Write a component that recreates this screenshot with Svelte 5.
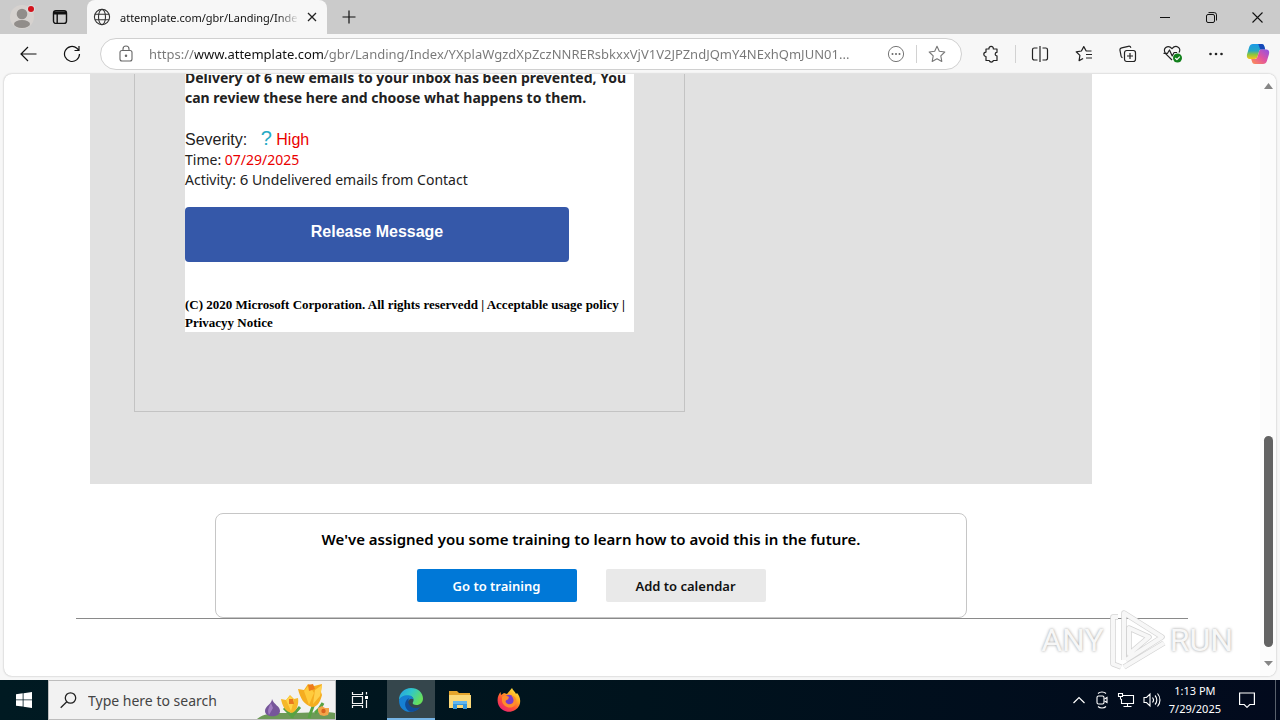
<script>
  const url = 'https://www.attemplate.com/gbr/Landing/Index/YXplaWgzdXpZczNNRERsbkxxVjV1V2JPZndJQmY4NExhQmJUN01...';
</script>

<div class="desktop">
  <div class="browser">
    <header class="titlebar">
      <div class="corner">
        <button class="plain profile" aria-label="Profile">
          <svg width="26" height="28" viewBox="0 0 26 28">
            <circle cx="13" cy="14" r="12" fill="#d6d2cf" />
            <circle cx="13" cy="11" r="5.3" fill="#918d8a" />
            <ellipse cx="13" cy="21" rx="8" ry="4" fill="#918d8a" />
            <circle cx="22" cy="6" r="4.2" fill="#ddd8d8" />
            <circle cx="22" cy="6" r="3" fill="#d3131c" />
          </svg>
        </button>
        <button class="plain" aria-label="Tab actions">
          <svg width="16" height="16" viewBox="0 0 16 16" fill="none" stroke="#111" stroke-width="1.4">
            <rect x="1.5" y="1.8" width="13" height="12.6" rx="2.4" />
            <path d="M2 4h12" stroke-width="3" /><path d="M5.2 4v10" />
          </svg>
        </button>
      </div>
      <div class="tab">
        <svg width="18" height="18" viewBox="0 0 18 18" fill="none" stroke="#333" stroke-width="1.1">
          <circle cx="9" cy="9" r="7.6" /><ellipse cx="9" cy="9" rx="3.5" ry="7.6" /><path d="M2 6.3h14M2 11.7h14" />
        </svg>
        <span class="tabname">attemplate.com/gbr/Landing/Inde</span>
        <button class="plain" aria-label="Close tab">
          <svg width="10" height="10" viewBox="0 0 10 10" stroke="#222" stroke-width="1.3"><path d="M1 1l8 8M9 1l-8 8" /></svg>
        </button>
      </div>
      <button class="plain newtab" aria-label="New tab">
        <svg width="14" height="14" viewBox="0 0 14 14" stroke="#111" stroke-width="1.2"><path d="M7 .5v13M.5 7h13" /></svg>
      </button>
      <div class="wincontrols">
        <button class="plain" aria-label="Minimize"><svg width="11" height="11" viewBox="0 0 11 11" stroke="#111"><path d="M0 5.5h10" /></svg></button>
        <button class="plain" aria-label="Restore">
          <svg width="11" height="11" viewBox="0 0 11 11" fill="none" stroke="#111"><rect x=".5" y="2.5" width="8" height="8" rx="1.5" /><path d="M2.5.6h5.8a2.2 2.2 0 0 1 2.2 2.2v5.7" /></svg>
        </button>
        <button class="plain" aria-label="Close"><svg width="11" height="11" viewBox="0 0 11 11" stroke="#111" stroke-width="1.1"><path d="M.5.5l10 10M10.500.5l-10 10" /></svg></button>
      </div>
    </header>

    <nav class="toolbar">
      <div class="navbuttons">
        <button class="plain" aria-label="Back"><svg width="17" height="16" viewBox="0 0 17 16" fill="none" stroke="#111" stroke-width="1.2"><path d="M16.500 8H1M8 1L1 8l7 7" /></svg></button>
        <button class="plain" aria-label="Refresh"><svg width="18" height="18" viewBox="0 0 18 18" fill="none" stroke="#111" stroke-width="1.2"><path d="M16.500 9a7.500 7.500 0 1 1-2.600-5.700l1.800 1.800M16 1v4.500h-4.500" /></svg></button>
      </div>
      <div class="address">
        <svg width="14" height="17" viewBox="0 0 14 17" fill="none" stroke="#666" stroke-width="1.1"><rect x="1" y="5.500" width="12" height="10.500" rx="2" /><path d="M4 5.500V4a3 3 0 0 1 6 0v1.500" /><circle cx="7" cy="10.700" r=".7" fill="#555" /></svg>
        <input class="url" aria-label="Address" value={url} readonly />
        <button class="plain" aria-label="More in address bar">
          <svg width="18" height="18" viewBox="0 0 18 18" fill="none" stroke="#777"><circle cx="9" cy="9" r="7.600" /><g fill="#666" stroke="none"><circle cx="5.500" cy="9" r="1" /><circle cx="9" cy="9" r="1" /><circle cx="12.500" cy="9" r="1" /></g></svg>
        </button>
        <span class="rule"></span>
        <button class="plain" aria-label="Add to favorites">
          <svg width="18" height="18" viewBox="0 0 18 18" fill="none" stroke="#777" stroke-width="1.1" stroke-linejoin="round"><path d="M9 1.300l2.300 5 5.500.7-4 3.800 1 5.600L9 13.700l-4.800 2.700 1-5.600-4-3.800 5.500-.7z" /></svg>
        </button>
      </div>
      <div class="tools">
        <button class="plain" aria-label="Extensions">
          <svg width="18" height="18" viewBox="0 0 18 18" fill="none" stroke="#222" stroke-width="1.200" stroke-linejoin="round"><path d="M4 4h3a2.200 2.200 0 1 1 4.300 0H15v3.300a1.800 1.800 0 1 0 0 3.600v4.600h-3.600a2.200 2.200 0 0 1-4.200 0H4v-4a2.200 2.200 0 1 1 0-4.400z" /></svg>
        </button>
        <span class="rule"></span>
        <button class="plain" aria-label="Split screen">
          <svg width="18" height="18" viewBox="0 0 18 18" fill="none" stroke="#222" stroke-width="1.200"><path d="M9 1v16M6.500 3H3.300A1.800 1.800 0 0 0 1.500 4.800v8.400A1.800 1.800 0 0 0 3.300 15h3.200M11.500 3h3.200a1.800 1.800 0 0 1 1.800 1.800v8.400a1.800 1.800 0 0 1-1.800 1.800h-3.200" /></svg>
        </button>
        <button class="plain" aria-label="Favorites">
          <svg width="18" height="18" viewBox="0 0 18 18" fill="none" stroke="#222" stroke-width="1.200" stroke-linejoin="round"><path d="M16.500 6h-5.300L8.800 1.600 6.400 6l-5.200.8 3.700 3.600-.8 5.200 4-2.100M11 9.500h6M11 13h6" /></svg>
        </button>
        <button class="plain" aria-label="Collections">
          <svg width="18" height="18" viewBox="0 0 18 18" fill="none" stroke="#222" stroke-width="1.200"><rect x="5.500" y="5.500" width="11" height="11" rx="2.200" /><path d="M11 8v6M8 11h6M3.500 12.700a2 2 0 0 1-1.400-1.500L1 5.400a2.200 2.200 0 0 1 1.700-2.600l6.600-1.500a2.200 2.200 0 0 1 2.600 1.500" /></svg>
        </button>
        <button class="plain" aria-label="Browser essentials">
          <svg width="18" height="18" viewBox="0 0 18 18" overflow="visible" fill="none" stroke="#222" stroke-width="1.200" stroke-linejoin="round"><path d="M9 15L2.800 8.800C-1.500 3.500 5-1 9 3.700 13-1 19 3 16 7.500M.5 8.300h4l2-3.300 2.700 6 1.900-3.500h3" /><circle cx="14.500" cy="13" r="4.500" fill="#12801c" stroke="none" /><path d="M12.300 13l1.600 1.600 2.900-3" stroke="#fff" /></svg>
        </button>
        <button class="plain" aria-label="Settings and more"><svg width="18" height="18" viewBox="0 0 18 18" fill="#222"><circle cx="3.500" cy="9" r="1.300" /><circle cx="9" cy="9" r="1.300" /><circle cx="14.500" cy="9" r="1.300" /></svg></button>
        <button class="plain copilot" aria-label="Copilot">
          <svg width="24" height="22" viewBox="0 0 24 22">
            <defs>
              <linearGradient id="cpa" x1="0" y1="0" x2="0" y2="1"><stop offset="0" stop-color="#1b9ae8" /><stop offset=".45" stop-color="#27a8c4" /><stop offset=".7" stop-color="#8cc63e" /><stop offset="1" stop-color="#f6c51c" /></linearGradient>
              <linearGradient id="cpb" x1="1" y1="0" x2="0" y2="1"><stop offset="0" stop-color="#8b52e8" /><stop offset=".5" stop-color="#e2539e" /><stop offset="1" stop-color="#ff9350" /></linearGradient>
            </defs>
            <path d="M7 1h8.500c2 0 2.500 1.300 3 3l.7 2.500h-3.500c-1.500 0-2.300.8-2.700 2.300l-1.500 5c-.5 1.600-1.300 2.200-3 2.200H4C1 16 .4 13.500 1.200 10.700L3.200 4C3.900 2 5 1 7 1z" fill="url(#cpa)" />
            <path d="M12 1h3.500c2 0 2.500 1.300 3 3l.7 2.500h-3.500c-1.300 0-1.800-.5-2.200-2L13 3c-.2-1-.4-1.600-1-2z" fill="#1748b8" />
            <path d="M17 21H9c-2 0-2.700-1.200-3.200-3L5.200 16H8.500c1.700 0 2.500-.8 3-2.300l1.500-5c.4-1.600 1.200-2.200 2.700-2.200H20c3 0 3.700 2.300 2.900 5L20.900 18c-.6 2-1.900 3-3.900 3z" fill="url(#cpb)" />
          </svg>
        </button>
      </div>
    </nav>

    <div class="viewport">
      <main class="page">
        <div class="content">
          <section class="backdrop">
            <div class="frame">
              <div class="message">
                <h1>Delivery of 6 new emails to your inbox has been prevented, You can review these here and choose what happens to them.</h1>
                <p class="severity">Severity: <span class="mark">?</span> <span class="red">High</span></p>
                <p>Time: <span class="red">07/29/2025</span></p>
                <p>Activity: <span class="count">6</span> Undelivered emails from Contact</p>
                <a class="release" href="#release">Release Message</a>
                <p class="legal">(C) 2020 Microsoft Corporation. All rights reservedd | Acceptable usage policy | Privacyy Notice</p>
              </div>
            </div>
          </section>
          <section class="training">
            <h2>We've assigned you some training to learn how to avoid this in the future.</h2>
            <div class="actions">
              <button class="primary">Go to training</button>
              <button>Add to calendar</button>
            </div>
          </section>
        </div>
        <hr />
      </main>
      <div class="scrollbar">
        <svg width="9" height="7" viewBox="0 0 9 7"><path d="M4.500 0L9 6H0z" fill="#858585" /></svg>
        <div class="track"><span class="before"></span><span class="thumb"></span><span class="after"></span></div>
        <svg width="9" height="7" viewBox="0 0 9 7"><path d="M4.500 6L9 1H0z" fill="#858585" /></svg>
      </div>
      <div class="watermark">
        <span>ANY</span>
        <svg width="60" height="64" viewBox="0 0 60 64" fill="none" stroke-linejoin="round">
          <g stroke="#d4d4d4" stroke-width="5.500"><path d="M17 52V5l38 24-36 23M11 9H6v47l8 3M17 59l40-24M22 20v26l20-17z" /></g>
          <g stroke="#f7f7f7" stroke-width="4"><path d="M17 52V5l38 24-36 23M11 9H6v47l8 3M17 59l40-24M22 20v26l20-17z" /></g>
        </svg>
        <span>RUN</span>
      </div>
    </div>
  </div>

  <footer class="taskbar">
    <button class="plain start" aria-label="Start">
      <svg width="16" height="16" viewBox="0 0 16 16" fill="#fff"><path d="M0 2.300L6.700 1.300v6.200H0zM7.500 1.200L16 0v7.500H7.500zM0 8.300h6.700v6.300L0 13.700zM7.500 8.300H16V16l-8.500-1.200z" /></svg>
    </button>
    <label class="search">
      <svg width="17" height="17" viewBox="0 0 17 17" fill="none" stroke="#222" stroke-width="1.300"><circle cx="10.500" cy="6" r="5.200" /><path d="M6.800 9.700L.7 15.800" /></svg>
      <input aria-label="Search" placeholder="Type here to search" />
      <svg class="flowers" width="80" height="38" viewBox="0 0 80 38">
        <path d="M2 38c8-7 20-6 38-6 14 0 30-2 40 0v6z" fill="#6d9a57" />
        <path d="M54 37c2-8 5-12 5-16M60 32c4-3 6-6 8-10M37 37l1-11M29 27l8 8 8-9" stroke="#58a243" stroke-width="3" fill="none" />
        <path d="M17 18c0 5-7 7-7 12 0 7 15 7 15 0 0-5-6-6-8-12z" fill="#76569a" /><path d="M16 22c-2 4-4 7-2 12l4-7z" fill="#a07cc0" />
        <path d="M26 18l5 1 4-5 4 4 4-1c1 6-1 13-6 15-7-1-10-8-11-14z" fill="#f5b829" /><path d="M31 19l4-4 4 4-3 11z" fill="#ffd54a" /><path d="M34 18l4 0 1 5-5 0z" fill="#e97820" />
        <path d="M43 8l6 1 4-6 6 2 8-2-1 8 1 3c-2 8-5 12-10 12-8-2-12-9-14-18z" fill="#f5ad20" /><path d="M49 10l5-6 5 8-5 12z" fill="#ffcb3c" /><path d="M60 9l7-5-2 11-7 8z" fill="#ffd04a" /><path d="M53 4l5-1 2 5-6 2z" fill="#ed7b1b" />
        <path d="M63 27l4-2 3 2 4 0 0 4-1 3-4 1-4-1-2-4z" fill="#f3a449" /><circle cx="68.500" cy="30" r="2.200" fill="#d9641e" />
      </svg>
    </label>
    <div class="apps">
      <button class="plain" aria-label="Task view">
        <svg width="18" height="18" viewBox="0 0 18 18" fill="none" stroke="#f2f2f2" stroke-width="1.200"><path d="M1.500 1v2.500h10V1M1.500 17v-2.500h10V17M1.500 5.500h10v7h-10zM15.500 1v2.500M15.500 9v8" /><path d="M14 5h3v3h-3z" fill="#fff" stroke="none" /></svg>
      </button>
      <button class="plain active" aria-label="Microsoft Edge">
        <svg width="26" height="26" viewBox="0 0 26 26">
          <defs><linearGradient id="eg" x1="0" y1="0" x2="1" y2=".5"><stop offset="0" stop-color="#259be6" /><stop offset=".5" stop-color="#30c7c9" /><stop offset="1" stop-color="#67df5b" /></linearGradient></defs>
          <path d="M1 13C1 6 6.300 1 13 1c7 0 12 4.800 12 10.500 0 4-3 6.500-6.500 6.500-2.800 0-4.300-1.200-3.700-2.500 2-2.800.3-6.500-4.300-6.500C6 9 2 11 1 13z" fill="url(#eg)" />
          <path d="M1 13c1-3 4.500-4.700 8.500-4.700 3 0 5.800 1.500 6 4.200-1-1.500-6.200-1-5.500 4 .6 4 5 6.500 11 4.500C16 27 1 27 1 13z" fill="#1680d3" />
          <path d="M11 11c-5 3-5.500 9.500.5 13.500 4 1 8-1 11-4.500-5 2-10.500 1-12-4-.4-2 0-3.700.5-5z" fill="#104c98" />
        </svg>
      </button>
      <button class="plain" aria-label="File Explorer">
        <svg width="22" height="20" viewBox="0 0 22 20"><path d="M0 1h8l2 2h11v4H0z" fill="#e5a52c" /><path d="M0 5h22v13H0z" fill="#fbd878" /><path d="M4 11h14v8h-4v-4H8v4H4z" fill="#3596dc" /><path d="M4 11h14v3H4z" fill="#62b5ed" /></svg>
      </button>
      <button class="plain" aria-label="Firefox">
        <svg width="24" height="24" viewBox="0 0 24 24">
          <defs><linearGradient id="ff" x1=".9" y1="0" x2=".2" y2="1"><stop offset="0" stop-color="#fff14a" /><stop offset=".35" stop-color="#ffaf21" /><stop offset=".65" stop-color="#ff5236" /><stop offset="1" stop-color="#e81e76" /></linearGradient></defs>
          <path d="M15 0c.5 2 3.500 4 4 6l1-1c3 3 4 8 2.500 12-4 9-17 9-21 0C-.5 12 1 7 3.500 4l.5 3 3-2 3 1c2-2 3-4 5-6z" fill="url(#ff)" />
          <circle cx="12" cy="12.500" r="5.800" fill="#793ccc" /><path d="M5 9c2-2 5-1 7 0l-1 2.500c-2 .3-3 1.500-2 3 2 3 7 2 7.500-1.500.2-2-.7-4-2-5 5 0 6 6 3.500 9-4 5-12 2-13-4z" fill="#ff8c2b" />
        </svg>
      </button>
    </div>
    <div class="tray">
      <svg width="12" height="8" viewBox="0 0 12 8" fill="none" stroke="#fff" stroke-width="1.200"><path d="M.5 7L6 1.500 11.500 7" /></svg>
      <svg class="camera" width="14" height="18" viewBox="0 0 14 18" fill="none" stroke="#fff" stroke-width="1.100"><rect x="2" y="5" width="7" height="8" rx="1.500" /><path d="M9.500 8l2.500-1.500v5L9.500 10M3 2.500c2-2 6-2 8 0M3 15.500c2 2 6 2 8 0" /></svg>
      <svg width="18" height="16" viewBox="0 0 18 16" fill="none" stroke="#fff" stroke-width="1.100"><path d="M6 3.500h10.500v8H4.500V7M10.500 11.500v3M6.500 14.500h8M1.500 1.500h4v3h-4zM3.500 4.500v3" /></svg>
      <svg width="18" height="16" viewBox="0 0 18 16" fill="none" stroke="#fff" stroke-width="1.100"><path d="M1 5.500h2.500L7 2v12l-3.500-3.500H1zM9.500 5.500c1.300 1.500 1.300 3.500 0 5M12 3.500c2.400 2.500 2.400 6.500 0 9M14.500 1.500c3.300 3.800 3.300 9.200 0 13" /></svg>
      <time datetime="2025-07-29T13:13">1:13 PM<br />7/29/2025</time>
      <button class="plain" aria-label="Notifications">
        <svg width="16" height="16" viewBox="0 0 16 16" fill="none" stroke="#fff" stroke-width="1.200"><path d="M.6 1h14.800v11.500h-4.600L8 15.300l-2.800-2.800H.6z" /></svg>
      </button>
    </div>
  </footer>
</div>

<style>
  .desktop {
    display: flex;
    flex-direction: column;
    height: 100vh;
    overflow: hidden;
    font-family: "Noto Sans", "Open Sans", sans-serif;
    font-size: 14px;
    color: #222;
  }
  svg { display: block; flex: none; }
  button, input { font: inherit; }
  .plain {
    display: flex;
    align-items: center;
    justify-content: center;
    padding: 0;
    border: 0;
    background: none;
  }
  .browser {
    flex: 1;
    min-height: 0;
    display: flex;
    flex-direction: column;
    background: #f7f7f7;
  }

  .titlebar { display: flex; height: 34px; background: #cbcbcb; }
  .corner {
    display: flex;
    align-items: center;
    gap: 17px;
    width: 78px;
    padding-left: 9px;
    border-radius: 0 0 8px 0;
  }
  .tab {
    display: flex;
    align-items: center;
    width: 224px;
    padding: 0 10px 0 6px;
    border-radius: 8px 8px 0 0;
    background: #f7f7f7;
  }
  .tabname {
    flex: 1;
    margin: 0 8px 0 9px;
    overflow: hidden;
    white-space: nowrap;
    font-size: 11px;
    color: #111;
    mask-image: linear-gradient(to right, #000 88%, transparent);
  }
  .newtab { width: 44px; }
  .wincontrols { display: flex; margin-left: auto; }
  .wincontrols button { width: 46px; }

  .toolbar { display: flex; align-items: center; height: 39px; padding-right: 10px; }
  .navbuttons { display: flex; gap: 26px; width: 80px; padding-left: 20px; }
  .address {
    flex: 1;
    display: flex;
    align-items: center;
    height: 32px;
    box-sizing: border-box;
    padding: 0 15px 0 18px;
    border: 1px solid #d0d0d0;
    border-radius: 16px;
    background: #fff;
  }
  .url {
    flex: 1;
    min-width: 0;
    margin: 0 16px;
    padding: 0;
    border: 0;
    outline: 0;
    font-size: 13px;
    color: transparent;
    background: linear-gradient(to right, #777 46px, #111 46px, #111 176px, #777 176px);
    background-clip: text;
  }
  .rule { width: 1px; height: 18px; background: #d2d2d2; }
  .address .rule { margin: 0 11px; }
  .tools { display: flex; align-items: center; gap: 26px; margin-left: 20px; }
  .tools .rule { margin: 0 -11px; }
  .copilot { margin-left: -5px; }

  .viewport {
    position: relative;
    flex: 1;
    min-height: 0;
    display: flex;
    margin: 1px 4px 4px;
    border-radius: 8px;
    overflow: hidden;
    background: #fff;
    box-shadow: 0 0 2px #aaa;
  }
  .page { flex: 1; padding: 0 72px; }
  .content { padding: 0 96px 0 14px; }
  .backdrop { padding: 0 44px 72px; background: #e1e1e1; }
  .frame {
    box-sizing: border-box;
    width: 551px;
    max-width: 100%;
    padding: 0 50px 79px;
    border: 1px solid #c3c3c3;
    border-top: 0;
  }
  .message { margin-top: -6px; background: #fff; }
  h1, h2, p { margin: 0; }
  h1 { padding-bottom: 20px; font-size: 14px; line-height: 20px; font-weight: 700; }
  .message p { line-height: 20px; }
  .message .severity { font: 16px/21px "Liberation Sans", Arial, sans-serif; }
  .mark { margin-left: 9px; font-size: 20px; line-height: 20px; color: #25aac5; }
  .message .red { color: #ea0000; }
  .count { font-size: 15px; line-height: 1; }
  .release {
    display: block;
    box-sizing: border-box;
    width: 384px;
    max-width: 100%;
    margin: 17px 0 34px;
    padding: 16px 0 21px;
    border-radius: 4px;
    background: #3558a9;
    color: #fff;
    font: bold 16px/18px "Liberation Sans", Arial, sans-serif;
    text-align: center;
    text-decoration: none;
  }
  .message .legal { font: bold 13px/18px "Liberation Serif", "Times New Roman", serif; color: #000; }

  .training {
    box-sizing: border-box;
    width: 75%;
    margin: 29px auto 0;
    padding: 13px 0 15px;
    border: 1px solid #c6c6c6;
    border-radius: 8px;
    text-align: center;
  }
  h2 { font-size: 15px; line-height: 24px; font-weight: 600; color: #000; }
  .actions { display: flex; justify-content: center; gap: 29px; margin-top: 18px; }
  .actions button {
    width: 160px;
    height: 33px;
    padding: 0;
    border: 0;
    border-radius: 2px;
    background: #e9e9e9;
    color: #111;
    font-size: 13px;
    font-weight: 600;
  }
  .actions .primary { background: #0078d7; color: #fff; }
  hr { margin: 0; border: 0; border-top: 1px solid #8a8a8a; }

  .scrollbar {
    display: flex;
    flex-direction: column;
    align-items: center;
    width: 16px;
    padding: 9px 0;
    box-sizing: border-box;
    background: #fcfcfc;
  }
  .track { flex: 1; display: flex; flex-direction: column; width: 9px; }
  .before { flex: 346; }
  .thumb { flex: 211; border-radius: 5px; background: #636363; }
  .after { flex: 13; }

  .watermark {
    position: absolute;
    right: 43px;
    bottom: 4px;
    display: flex;
    align-items: center;
    gap: 3px;
    font-family: Roboto, "Liberation Sans", sans-serif;
    font-size: 32px;
    line-height: 64px;
    color: #f7f7f7;
    text-shadow: 0 0 3px #999;
    pointer-events: none;
  }

  .taskbar {
    display: flex;
    height: 40px;
    background: linear-gradient(to right, #001a22, #00131d 50%, #020a1d);
  }
  .start { width: 48px; }
  .search {
    display: flex;
    align-items: center;
    box-sizing: border-box;
    width: 288px;
    padding-left: 11px;
    border: 1px solid #bdbdbd;
    background: #f2f2f2;
  }
  .search input {
    flex: 1;
    min-width: 0;
    margin-left: 11px;
    padding: 0;
    border: 0;
    outline: 0;
    background: none;
  }
  .search input::placeholder { color: #444; opacity: 1; }
  .apps { display: flex; gap: 1px; }
  .apps button { width: 48px; }
  .apps .active { margin-left: 2px; box-shadow: inset 0 -2px #76b5e6; background: #35464c; }
  .tray {
    display: flex;
    align-items: center;
    gap: 8px;
    margin: 0 4px 0 auto;
    padding-right: 20px;
    border-right: 1px solid #59616c;
    color: #fff;
  }
  .tray .camera { margin-left: 2px; }
  time { font-size: 11px; line-height: 18px; text-align: center; }
  .tray button { margin-left: 10px; }
</style>
